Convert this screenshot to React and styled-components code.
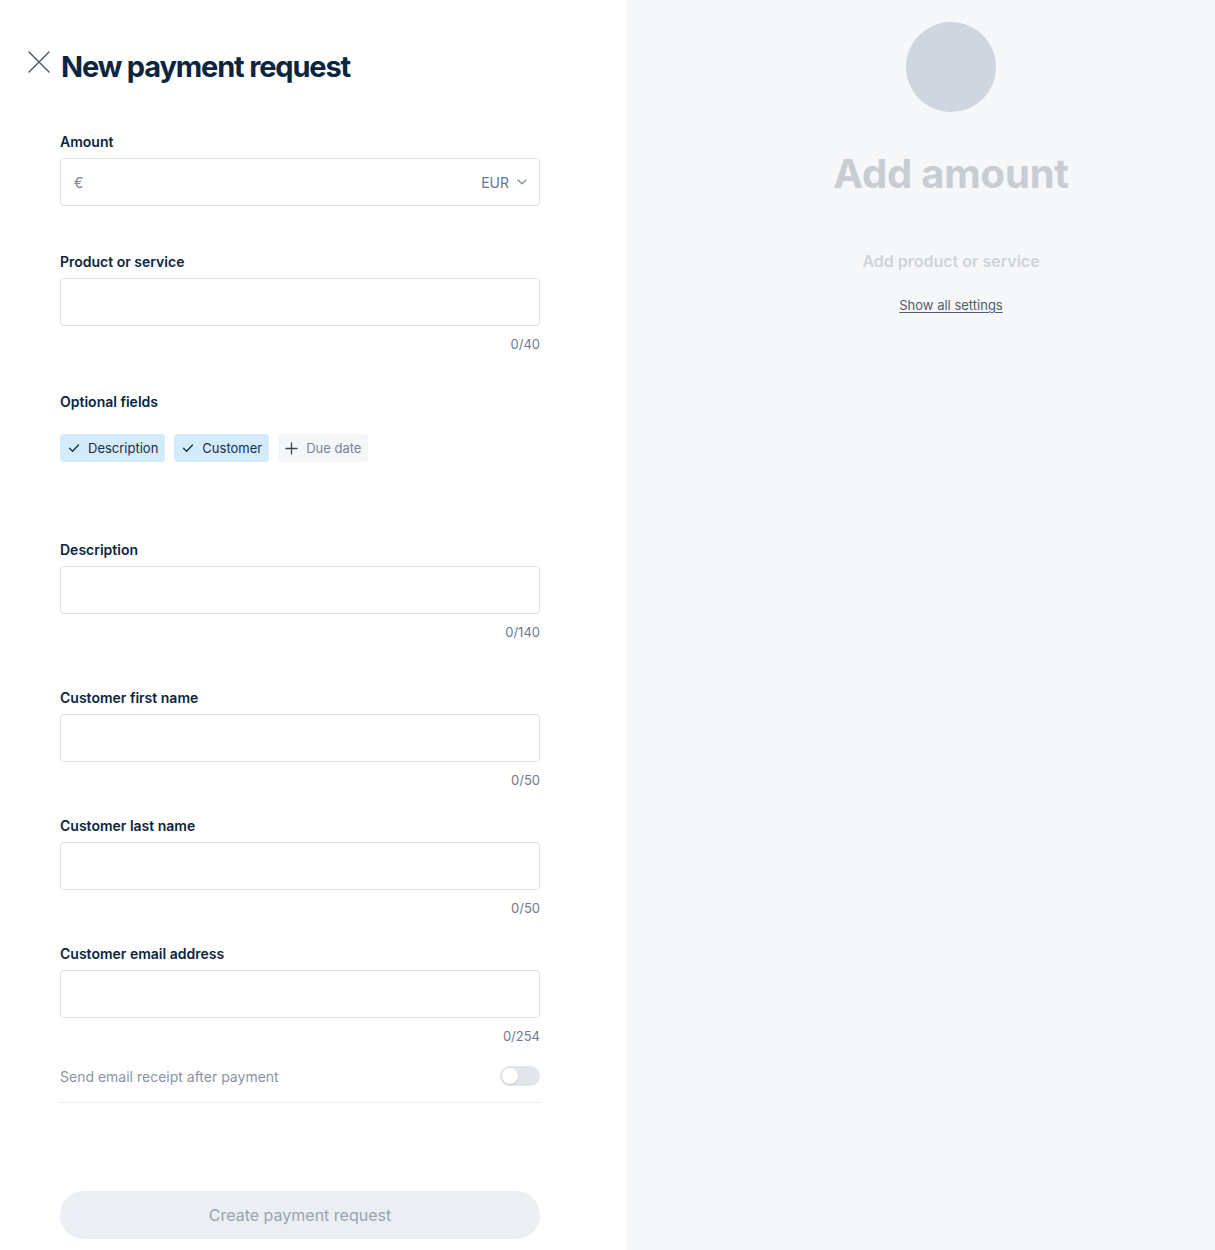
import React from 'react';
import styled, { createGlobalStyle } from 'styled-components';

const GlobalStyle = createGlobalStyle`
  html, body {
    margin: 0;
    padding: 0;
    background: #ffffff;
  }
  body {
    font-family: Inter, 'Noto Sans', 'Liberation Sans', sans-serif;
    -webkit-font-smoothing: antialiased;
  }
  * { box-sizing: border-box; }
`;

const Page = styled.div`
  display: flex;
  min-height: 1250px;
`;

const FormPanel = styled.div`
  width: 626px;
  flex-shrink: 0;
  background: #ffffff;
  padding: 46px 0 11px 0;
`;

const Header = styled.div`
  display: flex;
  align-items: center;
  gap: 10px;
  padding-left: 27px;
  height: 40px;
`;

const CloseButton = styled.button`
  width: 24px;
  height: 24px;
  padding: 0;
  border: none;
  background: none;
  cursor: pointer;
  display: flex;
  align-items: center;
  justify-content: center;
  margin-top: -8px;
`;

const Title = styled.h1`
  margin: 0;
  font-size: 29px;
  font-weight: 700;
  letter-spacing: -0.04em;
  color: #0a2540;
`;

const Form = styled.div`
  width: 480px;
  margin: 46px 0 0 60px;
  display: flex;
  flex-direction: column;
`;

const Field = styled.div`
  display: flex;
  flex-direction: column;
  margin-bottom: ${(p) => p.$after || 0}px;
`;

const Label = styled.label`
  font-size: 14px;
  line-height: 20px;
  font-weight: 600;
  color: #0a2540;
  margin-bottom: ${(p) => p.$gap || 6}px;
`;

const InputBox = styled.div`
  height: 48px;
  border: 1px solid #dcdfe4;
  border-radius: 4px;
  display: flex;
  align-items: center;
  padding: 0 12px 0 13px;
  background: #fff;
`;

const TextInput = styled.input`
  flex: 1;
  border: none;
  outline: none;
  height: 100%;
  font: inherit;
  font-size: 14px;
  color: #0a2540;
  background: transparent;
  padding: 0;
`;

const Prefix = styled.span`
  font-size: 14px;
  color: #7a8596;
  margin-right: 6px;
`;

const Currency = styled.span`
  display: flex;
  align-items: center;
  gap: 8px;
  font-size: 14px;
  color: #6b7685;
`;

const Counter = styled.div`
  margin-top: 9px;
  text-align: right;
  font-size: 13px;
  line-height: 18px;
  color: #6b7a90;
`;

const Chips = styled.div`
  display: flex;
  gap: 9px;
`;

const Chip = styled.button`
  height: 28px;
  display: flex;
  align-items: center;
  gap: 8px;
  border: none;
  border-radius: 4px;
  padding: 0 7px 0 ${(p) => (p.$active ? 8 : 7)}px;
  font: inherit;
  font-size: 13px;
  cursor: pointer;
  background: ${(p) => (p.$active ? '#d3ecfc' : '#f5f6f8')};
  color: ${(p) => (p.$active ? '#1c2b45' : '#7b8594')};
`;

const ToggleRow = styled.div`
  display: flex;
  align-items: center;
  justify-content: space-between;
  padding: 21px 0 16px;
  border-bottom: 1px solid #eceef1;
`;

const ToggleText = styled.span`
  font-size: 14px;
  color: #8a93a3;
`;

const Toggle = styled.div`
  width: 40px;
  height: 20px;
  border-radius: 10px;
  background: #e2e5ea;
  padding: 2px;
  display: flex;
`;

const Knob = styled.div`
  width: 16px;
  height: 16px;
  border-radius: 50%;
  background: #fff;
  box-shadow: 0 1px 2px rgba(0, 0, 0, 0.15);
`;

const SubmitButton = styled.button`
  margin-top: 88px;
  height: 48px;
  border: none;
  border-radius: 24px;
  background: #ebeef2;
  color: #9aa4b2;
  font: inherit;
  font-size: 16px;
  cursor: default;
`;

const Preview = styled.div`
  flex: 1;
  background: #f6f7f9;
  display: flex;
  flex-direction: column;
  align-items: center;
  padding: 22px 0 0 61px;
`;

const Avatar = styled.div`
  width: 90px;
  height: 90px;
  border-radius: 50%;
  background: #cfd6e0;
`;

const PreviewAmount = styled.div`
  margin-top: 37px;
  font-size: 40px;
  line-height: 50px;
  font-weight: 700;
  color: #c8ccd3;
  letter-spacing: -0.005em;
`;

const PreviewProduct = styled.div`
  margin-top: 51px;
  font-size: 16px;
  line-height: 22px;
  font-weight: 600;
  color: #d0d3d9;
`;

const SettingsLink = styled.a`
  margin-top: 24px;
  font-size: 13px;
  line-height: 18px;
  color: #525c6b;
  text-decoration: underline;
  text-underline-offset: 2px;
  cursor: pointer;
`;

const CloseIcon = () => (
  <svg width="24" height="24" viewBox="0 0 24 24" fill="none">
    <path d="M2 2L22 22M22 2L2 22" stroke="#4a5568" strokeWidth="1.4" strokeLinecap="round" />
  </svg>
);

const Check = () => (
  <svg width="12" height="12" viewBox="0 0 12 12" fill="none">
    <path d="M1.5 6.2L4.6 9.2L10.5 3" stroke="#1c2b45" strokeWidth="1.3" strokeLinecap="round" strokeLinejoin="round" />
  </svg>
);

const Plus = () => (
  <svg width="13" height="13" viewBox="0 0 13 13" fill="none">
    <path d="M6.5 1V12M1 6.5H12" stroke="#3c4452" strokeWidth="1.3" strokeLinecap="round" />
  </svg>
);

const Chevron = () => (
  <svg width="10" height="6" viewBox="0 0 10 6" fill="none">
    <path d="M1 1L5 4.8L9 1" stroke="#7a8596" strokeWidth="1.2" strokeLinecap="round" strokeLinejoin="round" />
  </svg>
);

const TextField = ({ label, max, after }) => (
  <Field $after={after}>
    <Label>{label}</Label>
    <InputBox>
      <TextInput />
    </InputBox>
    <Counter>0/{max}</Counter>
  </Field>
);

const App = () => (
  <>
    <GlobalStyle />
    <Page>
      <FormPanel>
        <Header>
          <CloseButton aria-label="Close">
            <CloseIcon />
          </CloseButton>
          <Title>New payment request</Title>
        </Header>
        <Form>
          <Field $after={46}>
            <Label>Amount</Label>
            <InputBox>
              <Prefix>€</Prefix>
              <TextInput />
              <Currency>
                EUR <Chevron />
              </Currency>
            </InputBox>
          </Field>
          <TextField label="Product or service" max={40} after={39} />
          <Field $after={78}>
            <Label $gap={22}>Optional fields</Label>
            <Chips>
              <Chip $active>
                <Check /> Description
              </Chip>
              <Chip $active>
                <Check /> Customer
              </Chip>
              <Chip>
                <Plus /> Due date
              </Chip>
            </Chips>
          </Field>
          <TextField label="Description" max={140} after={47} />
          <TextField label="Customer first name" max={50} after={27} />
          <TextField label="Customer last name" max={50} after={27} />
          <TextField label="Customer email address" max={254} after={0} />
          <ToggleRow>
            <ToggleText>Send email receipt after payment</ToggleText>
            <Toggle>
              <Knob />
            </Toggle>
          </ToggleRow>
          <SubmitButton>Create payment request</SubmitButton>
        </Form>
      </FormPanel>
      <Preview>
        <Avatar />
        <PreviewAmount>Add amount</PreviewAmount>
        <PreviewProduct>Add product or service</PreviewProduct>
        <SettingsLink>Show all settings</SettingsLink>
      </Preview>
    </Page>
  </>
);

export default App;
